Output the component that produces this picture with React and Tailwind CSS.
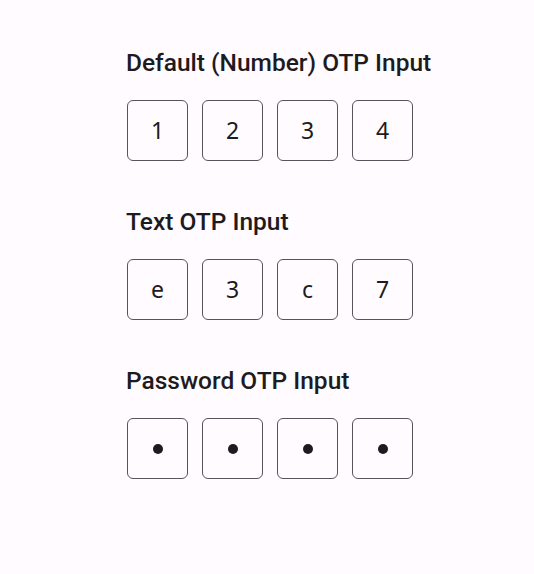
import React from "react";

const sections = [
  { title: "Default (Number) OTP Input", values: ["1", "2", "3", "4"] },
  { title: "Text OTP Input", values: ["e", "3", "c", "7"] },
  { title: "Password OTP Input", values: ["•", "•", "•", "•"], password: true },
];

const OtpBox = ({ value, password }) => (
  <div className="w-[61px] h-[61px] rounded-[6px] border-[1.5px] border-[#57535c] flex items-center justify-center">
    {password ? (
      <span className="w-[10px] h-[10px] rounded-full bg-[#1d1b20]" />
    ) : (
      <span
        className="text-[23px] text-[#1d1b20] leading-none"
        style={{ fontFamily: '"Noto Sans", sans-serif' }}
      >
        {value}
      </span>
    )}
  </div>
);

const App = () => {
  return (
    <div
      className="w-[534px] h-[574px] bg-[#fffbfe] pl-[126px] pt-[49px] flex flex-col gap-[47px]"
      style={{ fontFamily: "Roboto, sans-serif" }}
    >
      {sections.map((s) => (
        <div key={s.title} className="flex flex-col">
          <h2 className="text-[24.5px] leading-[28px] font-medium text-[#1d1b20]">{s.title}</h2>
          <div className="flex gap-[14px] mt-[23px] pl-[1px]">
            {s.values.map((v, i) => (
              <OtpBox key={i} value={v} password={s.password} />
            ))}
          </div>
        </div>
      ))}
    </div>
  );
};

export default App;
